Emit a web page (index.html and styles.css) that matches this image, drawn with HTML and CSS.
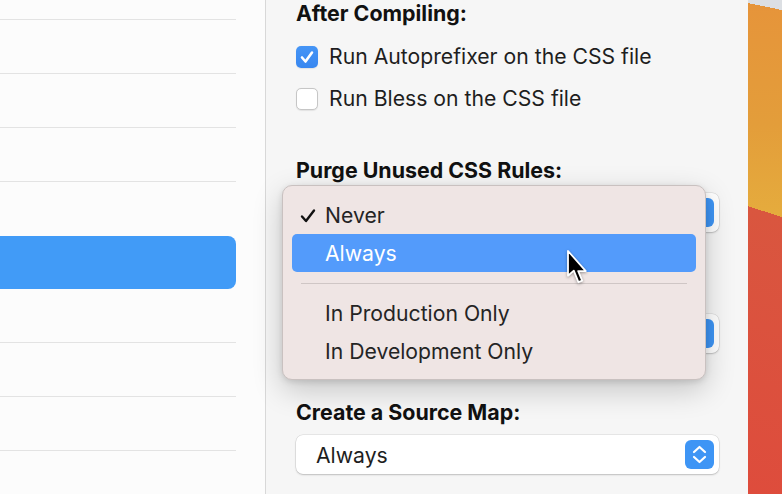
FILE: index.html
```html
<!DOCTYPE html>
<html lang="en">
<head>
    <meta charset="UTF-8">
    <meta name="viewport" content="width=device-width, initial-scale=1.0">
    <title>Project Settings</title>
    <link rel="stylesheet" href="styles.css">
</head>
<body>
    <div class="window">
        <!-- file list -->
        <aside class="sidebar">
            <ul class="file-list">
                <li class="file-row"></li>
                <li class="file-row"></li>
                <li class="file-row"></li>
                <li class="file-row"></li>
                <li class="file-row before-selected"></li>
                <li class="file-row selected"></li>
                <li class="file-row"></li>
                <li class="file-row"></li>
                <li class="file-row"></li>
            </ul>
        </aside>

        <!-- inspector -->
        <main class="panel">
            <h3 class="section-title">After Compiling:</h3>
            <div class="options">
                <label class="check-row">
                    <span class="checkbox checked">
                        <svg viewBox="0 0 22 22" width="22" height="22"><polyline points="6,11.5 9.5,15.5 16,6.5" /></svg>
                    </span>
                    Run Autoprefixer on the CSS file
                </label>
                <label class="check-row">
                    <span class="checkbox"></span>
                    Run Bless on the CSS file
                </label>
            </div>

            <div class="field">
                <h3 class="section-title">Purge Unused CSS Rules:</h3>
                <div class="popup">
                    <span></span>
                    <span class="stepper">
                        <svg viewBox="0 0 29 29" width="29" height="29"><polyline points="9,12 14.5,7 20,12" /><polyline points="9,17 14.5,22 20,17" /></svg>
                    </span>
                </div>
            </div>

            <!-- second option, under the open menu -->
            <div class="field">
                <div class="section-title"></div>
                <div class="popup">
                    <span></span>
                    <span class="stepper">
                        <svg viewBox="0 0 29 29" width="29" height="29"><polyline points="9,12 14.5,7 20,12" /><polyline points="9,17 14.5,22 20,17" /></svg>
                    </span>
                </div>
            </div>

            <div class="field">
                <h3 class="section-title">Create a Source Map:</h3>
                <div class="popup">
                    <span>Always</span>
                    <span class="stepper">
                        <svg viewBox="0 0 29 29" width="29" height="29"><polyline points="9,12 14.5,7 20,12" /><polyline points="9,17 14.5,22 20,17" /></svg>
                    </span>
                </div>
            </div>

            <!-- open popup menu for "Purge Unused CSS Rules" -->
            <ul class="menu">
                <li class="menu-item">
                    <svg class="tick" viewBox="0 0 16 16" width="16" height="16"><polyline points="2,8.5 6,13 14,2.5" /></svg>
                    Never
                </li>
                <li class="menu-item active">Always</li>
                <li class="menu-sep"></li>
                <li class="menu-item">In Production Only</li>
                <li class="menu-item">In Development Only</li>
            </ul>

            <svg class="cursor" viewBox="0 0 24 36" width="24" height="36">
                <polygon points="2,2 2,26.7 7.8,21.6 12.4,33.2 16.2,31.6 12.2,22.1 19.8,22.1" />
            </svg>
        </main>

        <div class="wallpaper"></div>
    </div>
</body>
</html>
```
FILE: styles.css
```css
body {
    margin: 0;
    font-family: Inter, "Liberation Sans", sans-serif;
    font-size: 21.2px;
    color: #1e1e1e;
    overflow: hidden;
}
.window {
    display: flex;
    height: 494px;
}

/* sidebar */
.sidebar {
    width: 265px;
    flex-shrink: 0;
    background-color: #fcfcfc;
    border-right: 1px solid #d8d8d8;
    overflow: hidden;
}
.file-list {
    list-style: none;
    margin: -34px 29px 0 -20px;
    padding: 0;
}
.file-row {
    height: 53px;
    border-bottom: 1px solid #e3e3e3;
}
.file-row.before-selected {
    border-bottom-color: transparent;
}
.file-row.selected {
    border-bottom: none;
    background-color: #419bf7;
    border-radius: 8px;
}

/* inspector panel */
.panel {
    position: relative;
    flex: 1;
    background-color: #f6f6f6;
    padding: 0 29px 0 30px;
}
.section-title {
    margin: 0;
    height: 26px;
    font-size: 21.4px;
    font-weight: 700;
    line-height: 26px;
    color: #111;
}
.options {
    margin-top: 17px;
    display: flex;
    flex-direction: column;
    gap: 16px;
}
.check-row {
    display: flex;
    align-items: center;
    gap: 11px;
    height: 26px;
    line-height: 26px;
}
.checkbox {
    width: 20px;
    height: 20px;
    border: 1px solid #c6c6c6;
    border-radius: 5px;
    background-color: #fff;
    box-shadow: 0 0.5px 1px rgba(0, 0, 0, 0.08);
    flex-shrink: 0;
    margin-top: 1px;
}
.checkbox.checked {
    width: 22px;
    height: 22px;
    border: none;
    background: linear-gradient(#4595f6, #3887f0);
}
.checkbox svg {
    display: block;
    fill: none;
    stroke: #fff;
    stroke-width: 2.6;
    stroke-linecap: round;
    stroke-linejoin: round;
}
.field {
    margin-top: 46px;
}
.popup {
    margin-top: 10px;
    height: 39px;
    box-sizing: border-box;
    display: flex;
    align-items: center;
    justify-content: space-between;
    padding: 0 5px 0 20px;
    background-color: #fff;
    border-radius: 7px;
    box-shadow: 0 0 0 0.5px rgba(0, 0, 0, 0.12), 0 1px 2px rgba(0, 0, 0, 0.18);
    color: #1e1e1e;
}
.stepper {
    width: 29px;
    height: 29px;
    border-radius: 6px;
    background-color: #3e95f5;
}
.stepper svg {
    display: block;
    fill: none;
    stroke: #fff;
    stroke-width: 2.2;
    stroke-linecap: round;
    stroke-linejoin: round;
}

/* popup menu */
.menu {
    position: absolute;
    left: 16px;
    top: 185px;
    width: 424px;
    height: 195px;
    box-sizing: border-box;
    margin: 0;
    padding: 10px 9px;
    list-style: none;
    background-color: #efe5e4;
    border: 1px solid #c9c1c0;
    border-radius: 10px;
    box-shadow: 0 10px 30px rgba(0, 0, 0, 0.2), 0 2px 6px rgba(0, 0, 0, 0.12);
}
.menu-item {
    position: relative;
    height: 38px;
    line-height: 38px;
    padding-left: 33px;
    border-radius: 5px;
    color: #242424;
}
.menu-item.active {
    background-color: #539bfb;
    color: #fff;
}
.tick {
    position: absolute;
    left: 8px;
    top: 12px;
    fill: none;
    stroke: #111;
    stroke-width: 2.4;
    stroke-linecap: round;
    stroke-linejoin: round;
}
.menu-sep {
    height: 22px;
    display: flex;
    align-items: center;
    padding: 0 9px;
}
.menu-sep::after {
    content: "";
    flex: 1;
    height: 1px;
    background-color: #cfc6c5;
}
.cursor {
    position: absolute;
    left: 300px;
    top: 249px;
    filter: drop-shadow(0 1px 1.5px rgba(0, 0, 0, 0.35));
}
.cursor polygon {
    fill: #000;
    stroke: #fff;
    stroke-width: 1.8;
    stroke-linejoin: round;
}

/* desktop behind the window */
.wallpaper {
    width: 34px;
    flex-shrink: 0;
    background:
        linear-gradient(191.6deg, #dcdfe3 2%, transparent 2%),
        linear-gradient(198deg, transparent 43%, #d9563f 43%, #de4c3c 100%),
        linear-gradient(180deg, #e6943a 0%, #e39d3a 25%, #e5ab3d 43%);
}
```
